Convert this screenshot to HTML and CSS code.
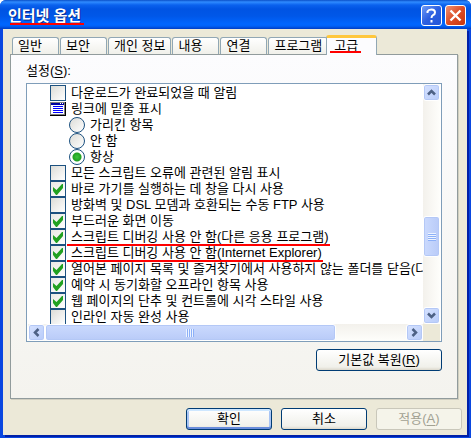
FILE: index.html
```html
<!DOCTYPE html>
<html lang="ko">
<head>
<meta charset="utf-8">
<title>인터넷 옵션</title>
<link rel="stylesheet" href="styles.css">
</head>
<body>
<main class="dialog">
  <header class="titlebar">
    <h1 class="title"><span class="marked">인터넷 옵션</span></h1>
    <button class="caption help" type="button" aria-label="도움말"><svg width="19" height="19" viewBox="0 0 19 19"><path d="M5.500 7V5.500Q6.500 3.500 9.500 3.500Q13 3.500 13 6.500Q13 8.300 11 9.200Q9.500 10 9.500 12M9.500 14v2.500" fill="none" stroke="#fff" stroke-width="2"/></svg></button>
    <button class="caption close" type="button" aria-label="닫기"><svg width="19" height="19" viewBox="0 0 19 19"><path d="M4.500 4.500l10 10M14.500 4.500l-10 10" fill="none" stroke="#fff" stroke-width="2.400"/></svg></button>
  </header>
  <div class="content">
    <nav class="tabs" role="tablist">
      <button class="tab" type="button" role="tab">일반</button>
      <button class="tab" type="button" role="tab">보안</button>
      <button class="tab" type="button" role="tab">개인 정보</button>
      <button class="tab" type="button" role="tab">내용</button>
      <button class="tab" type="button" role="tab">연결</button>
      <button class="tab" type="button" role="tab">프로그램</button>
      <button class="tab selected" type="button" role="tab" aria-selected="true"><span class="marked">고급</span></button>
    </nav>
    <section class="panel">
      <h2 class="heading">설정(<u>S</u>):</h2>
      <div class="listbox">
        <ul class="rows">
          <li><label class="row"><input class="check" type="checkbox"><span>다운로드가 완료되었을 때 알림</span></label></li>
          <li class="row"><svg class="group" width="16" height="16" viewBox="0 0 16 16" shape-rendering="crispEdges" aria-hidden="true"><path fill="#808080" d="M0 1h16v14H0z"/><path fill="#000" d="M15 1h1v14H0v-1h15z"/><path fill="#fff" d="M1 4h13v9H1z"/><path fill="#0000a0" d="M1 2h13v2H1z"/><path fill="#fff" d="M10 2h1v1h-1zM12 2h1v1h-1z"/><path fill="#0000ff" d="M3 5h10v1H3zM3 7h10v1H3zM3 9h10v1H3zM3 11h10v1H3z"/></svg><span>링크에 밑줄 표시</span></li>
          <li><label class="row nested"><input class="radio" type="radio" name="underline"><span>가리킨 항목</span></label></li>
          <li><label class="row nested"><input class="radio" type="radio" name="underline"><span>안 함</span></label></li>
          <li><label class="row nested"><input class="radio" type="radio" name="underline" checked><span>항상</span></label></li>
          <li><label class="row"><input class="check" type="checkbox"><span>모든 스크립트 오류에 관련된 알림 표시</span></label></li>
          <li><label class="row"><input class="check" type="checkbox" checked><span>바로 가기를 실행하는 데 창을 다시 사용</span></label></li>
          <li><label class="row"><input class="check" type="checkbox"><span>방화벽 및 DSL 모뎀과 호환되는 수동 FTP 사용</span></label></li>
          <li><label class="row"><input class="check" type="checkbox" checked><span>부드러운 화면 이동</span></label></li>
          <li><label class="row"><input class="check" type="checkbox" checked><span class="marked">스크립트 디버깅 사용 안 함(다른 응용 프로그램)</span></label></li>
          <li><label class="row"><input class="check" type="checkbox" checked><span class="marked">스크립트 디버깅 사용 안 함(Internet Explorer)</span></label></li>
          <li><label class="row"><input class="check" type="checkbox" checked><span>열어본 페이지 목록 및 즐겨찾기에서 사용하지 않는 폴더를 닫음(다</span></label></li>
          <li><label class="row"><input class="check" type="checkbox" checked><span>예약 시 동기화할 오프라인 항목 사용</span></label></li>
          <li><label class="row"><input class="check" type="checkbox" checked><span>웹 페이지의 단추 및 컨트롤에 시각 스타일 사용</span></label></li>
          <li><label class="row"><input class="check" type="checkbox"><span>인라인 자동 완성 사용</span></label></li>
        </ul>
        <div class="bar vertical">
          <button class="arrow" type="button" aria-label="위로"><svg width="9" height="9" viewBox="0 0 9 9"><path d="M1 6.500L4.500 3L8 6.500"/></svg></button>
          <div class="track"><div class="space above"></div><div class="thumb"><i class="grip"></i></div><div class="space below"></div></div>
          <button class="arrow" type="button" aria-label="아래로"><svg width="9" height="9" viewBox="0 0 9 9"><path d="M1 2.500L4.500 6L8 2.500"/></svg></button>
        </div>
        <div class="bar horizontal">
          <button class="arrow" type="button" aria-label="왼쪽"><svg width="9" height="9" viewBox="0 0 9 9"><path d="M6.500 1L3 4.500L6.500 8"/></svg></button>
          <div class="track"><div class="thumb"><i class="grip"></i></div><div class="space after"></div></div>
          <button class="arrow" type="button" aria-label="오른쪽"><svg width="9" height="9" viewBox="0 0 9 9"><path d="M2.500 1L6 4.500L2.500 8"/></svg></button>
        </div>
        <div class="corner"></div>
      </div>
      <button class="button restore" type="button">기본값 복원(<u>R</u>)</button>
    </section>
    <footer class="actions">
      <button class="button default" type="button">확인</button>
      <button class="button" type="button">취소</button>
      <button class="button" type="button" disabled>적용(<u>A</u>)</button>
    </footer>
  </div>
</main>
</body>
</html>
```
FILE: styles.css
```css
* { box-sizing: border-box; }
body {
  margin: 0;
  background: #fff;
  color: #000;
  font: 13px/16px "Liberation Sans", "Noto Sans CJK KR", sans-serif;
}
button { font: inherit; color: inherit; margin: 0; padding: 0; }
u { text-underline-offset: 2px; }

.dialog {
  display: flex;
  flex-direction: column;
  min-height: 100vh;
  background: #0a47e0;
  border-radius: 6px 6px 0 0;
  overflow: hidden;
}
.titlebar {
  display: flex;
  align-items: center;
  gap: 3px;
  height: 29px;
  padding: 2px 5px 0 8px;
  background: linear-gradient(#0a50c8 0, #2f8bff 2px, #0a62ee 5px, #0054e3 9px, #0057e8 16px, #0066ff 24px, #0062f8 26px, #003dc4 29px);
}
.title {
  flex: 1;
  margin: 0;
  color: #fff;
  font-size: 15px;
  line-height: 20px;
  text-shadow: 1px 1px #0a2a8c;
}
.marked { position: relative; white-space: nowrap; }
.marked::after {
  content: "";
  position: absolute;
  left: -4px;
  right: -1px;
  bottom: -1px;
  height: 2px;
  background: #f00;
}
.title .marked::after { left: 2px; right: -3px; }
.caption {
  display: grid;
  place-items: center;
  width: 21px;
  height: 21px;
  border: 1px solid #fff;
  border-radius: 3px;
}
.help { background: linear-gradient(135deg, #6f9cf8, #2c5fe0 50%, #2255d8); }
.close { background: linear-gradient(135deg, #ee9273, #dc4c26 50%, #c8360e); }

.content {
  flex: 1;
  margin: 0 4px 3px 3px;
  padding: 6px 5px 4px 7px;
  background: #ece9d8;
  box-shadow: 2px 2px #0020a8;
}
.tabs { display: flex; align-items: flex-end; gap: 1px; padding-left: 2px; }
.tab {
  min-width: 47px;
  height: 17px;
  padding: 0 5px;
  border: 1px solid #91a7b4;
  border-bottom: 0;
  border-radius: 3px 3px 0 0;
  background: linear-gradient(#fff, #f0f0ea);
  text-align: left;
  white-space: nowrap;
}
.tab.selected {
  position: relative;
  width: 51px;
  height: 20px;
  margin: 0 0 -1px -3px;
  padding: 0 7px 1px;
  border-top: 3px solid #ffc73c;
  background: #fcfcfe;
}
.tab.selected .marked::after { right: -3px; bottom: 0; }
.panel {
  display: flex;
  flex-direction: column;
  margin-right: 4px;
  padding: 8px 15px 27px;
  border: 1px solid #919b9c;
  background: linear-gradient(#fcfcfe, #f4f3ee);
  box-shadow: 1px 1px #d0cec0;
}
.heading { margin: 0 0 4px; font-size: 13px; font-weight: 400; line-height: 16px; }
.listbox {
  display: grid;
  grid-template-columns: minmax(0, 1fr) 17px;
  grid-template-rows: 240px 17px;
  padding: 0 1px;
  border: 1px solid #7f9db9;
  background: #fff;
}
.rows { margin: 0; padding: 1px 0 0 22px; list-style: none; overflow: hidden; }
.row { display: flex; align-items: center; gap: 5px; height: 16px; white-space: nowrap; }
.row > input, .row > svg { flex: none; }
.nested { padding-left: 19px; }
.check, .radio {
  appearance: none;
  width: 16px;
  height: 16px;
  margin: 0;
  border: 1px solid #1c5180;
  background: linear-gradient(135deg, #dcdcd7, #fff);
}
.check:checked {
  background: url("data:image/svg+xml,%3Csvg xmlns='http://www.w3.org/2000/svg' viewBox='0 0 14 14'%3E%3Cpath d='M2 5v4l3 4h1l6-7V2h-1L5.500 8z' fill='%2321a121'/%3E%3C/svg%3E"), linear-gradient(135deg, #e8e8e4, #fff);
}
.radio { border-radius: 50%; }
.radio:checked { background: radial-gradient(circle, #3ec43c 0, #21a121 4px, #fff 5px); }

.bar { display: flex; }
.vertical { flex-direction: column; background: linear-gradient(90deg, #f3f1ec, #fefefb); }
.horizontal { background: linear-gradient(#f3f1ec, #fefefb); }
.corner { background: #ece9d8; }
.track { display: flex; flex: 1; }
.vertical .track { flex-direction: column; }
.arrow {
  display: grid;
  place-items: center;
  flex: none;
  width: 17px;
  height: 17px;
}
.arrow, .thumb {
  border: 1px solid #fff;
  border-radius: 3px;
  background: linear-gradient(135deg, #d6e2ff, #b8ccfa);
  box-shadow: inset 0 0 0 1px #b4c8f6;
}
.arrow path { fill: none; stroke: #4d6185; stroke-width: 2.5; }
.thumb { display: grid; place-items: center; }
.vertical .thumb { height: 41px; background: linear-gradient(90deg, #cbdafe, #b9cbf8); }
.horizontal .thumb { flex: 291; background: linear-gradient(#cbdafe, #b9cbf8); }
.above { flex: 115; }
.below { flex: 50; }
.after { flex: 71; }
.grip { width: 8px; height: 8px; background: repeating-linear-gradient(#eef4ff 0 1px, #8cb0f8 1px 2px); }
.horizontal .grip { background: repeating-linear-gradient(90deg, #eef4ff 0 1px, #8cb0f8 1px 2px); }

.button {
  width: 86px;
  height: 22px;
  border: 1px solid #003c74;
  border-radius: 3px;
  background: linear-gradient(#fff, #f0f0ea 85%, #dcd8cc);
}
.button.default { box-shadow: inset 0 2px #cee7ff, inset 0 -2px #698cdb, inset 2px 0 #a8c4f4, inset -2px 0 #a8c4f4; }
.button:disabled { border-color: #c9c7ba; background: #f5f4ea; color: #a1a192; }
.restore { width: 126px; align-self: flex-end; margin-top: 7px; }
.actions { display: flex; justify-content: flex-end; gap: 9px; padding: 9px 0 0; }
```
